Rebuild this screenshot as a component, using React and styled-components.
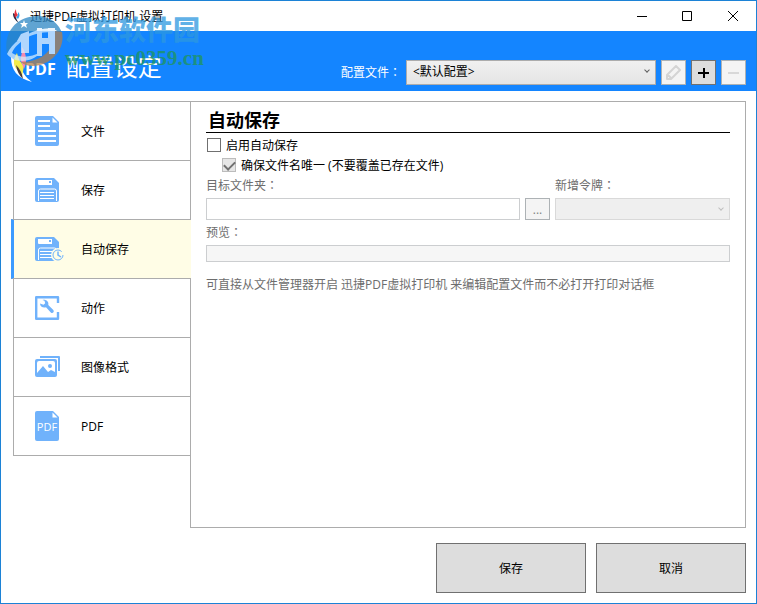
import React, { useState } from 'react'
import styled, { createGlobalStyle } from 'styled-components'

const menuItems = [
  { id: 'file', label: '文件' },
  { id: 'save', label: '保存' },
  { id: 'autosave', label: '自动保存' },
  { id: 'actions', label: '动作' },
  { id: 'image', label: '图像格式' },
  { id: 'pdf', label: 'PDF' },
]

const Sheet = () => (
  <g>
    <path d="M2 1h16l6 6v22a2 2 0 0 1-2 2H2a2 2 0 0 1-2-2V3a2 2 0 0 1 2-2z" fill="#70b2fb" />
    <path d="M17.500 2.500v5h5z" fill="#fff" />
  </g>
)

const MenuIcon = ({ id }) => {
  switch (id) {
    case 'file':
      return (
        <svg width="32" height="32" viewBox="0 0 32 32">
          <Sheet />
          <path d="M3 6h12M3 11h12M3 16h18M3 21h18M3 26h18" stroke="#fff" strokeWidth="2" />
        </svg>
      )
    case 'save':
    case 'autosave':
      return (
        <svg width="32" height="32" viewBox="0 0 32 32">
          <path d="M2 4h17l5 5v17a2 2 0 0 1-2 2H2a2 2 0 0 1-2-2V6a2 2 0 0 1 2-2z" fill="#70b2fb" />
          <path d="M3 6h14v5H4a1 1 0 0 1-1-1z" fill="#fff" />
          <path d="M14 7h2v2h-2z" fill="#70b2fb" />
          <path d="M3.500 27V17a2 2 0 0 1 2-2h14a2 2 0 0 1 2 2v10M5 18.500h14M5 21.500h14M5 24.500h14" fill="none" stroke="#fff" />
          {id === 'autosave' && (
            <g>
              <circle cx="23" cy="22" r="7" fill="#fffde6" />
              <circle cx="23" cy="22" r="5" fill="none" stroke="#70b2fb" strokeDasharray="27 4" />
              <path d="M23 18.500V22l3 2" fill="none" stroke="#70b2fb" strokeWidth="1.500" />
            </g>
          )}
        </svg>
      )
    case 'actions':
      return (
        <svg width="32" height="32" viewBox="0 0 32 32">
          <path d="M23 11V5.200H1.200v21.600H23V20" fill="none" stroke="#70b2fb" strokeWidth="2.400" strokeLinejoin="round" />
          <path d="M5 11.500l3.500 1.200 1.700-1.400-.7-2.500L7.500 8c3.500-.8 6.500 1.500 5.800 5l5 5c1.500 1.800-.8 4-2.500 2.500l-4.800-5.200C8 16.200 5 14.500 5 11.500z" fill="#70b2fb" />
        </svg>
      )
    case 'image':
      return (
        <svg width="32" height="32" viewBox="0 0 32 32">
          <path d="M5 6h19v14" fill="none" stroke="#70b2fb" strokeWidth="2" strokeLinejoin="round" />
          <rect y="8" width="22" height="18" rx="2" fill="#70b2fb" />
          <path d="M2 12a2 2 0 0 1 2-2h14a2 2 0 0 1 2 2v9l-4-2-3 2-5-6-6 7z" fill="#fff" />
          <circle cx="15" cy="15" r="2" fill="#70b2fb" />
        </svg>
      )
    default:
      return (
        <svg width="32" height="32" viewBox="0 0 32 32">
          <Sheet />
          <text x="12" y="21" textAnchor="middle" fontSize="11" fontFamily="Open Sans, sans-serif" fill="#fff">PDF</text>
        </svg>
      )
  }
}

const FlameLogo = () => (
  <svg width="22" height="36" viewBox="0 0 22 36">
    <path d="M0 10c0 13 6 21 21 25-7-5-10-10-11-17z" fill="#fff" />
    <path d="M6 6C3 11 2 15 4 20l7 9 2-10c-4-4-6-8-7-13z" fill="#f4ec4a" />
    <path d="M11 0c1 6-2 9-1 14l3 8c3-6 3-15-2-22z" fill="#f58bb0" />
    <path d="M5 18c1 6 3 10 7 14-1-6-3-10-7-14z" fill="#4a3a3a" />
  </svg>
)

const App = () => {
  const [active, setActive] = useState('autosave')
  const [enabled, setEnabled] = useState(false)

  return (
    <Window>
      <GlobalStyle />
      <TitleBar>
        <TitleIcon>
          <svg width="10" height="14" viewBox="0 0 10 14">
            <path d="M1 4c0 5 2 7 6 10-3-4-3-5-3-8z" fill="#1d2540" />
            <path d="M4 0C2 3 2 6 3 9l3-3C4 4 4 2 4 0z" fill="#e8313c" />
            <path d="M6 3c2 2 2 4 0 7L4 8c2-1 2-2 2-5z" fill="#38a0e8" />
          </svg>
        </TitleIcon>
        <TitleText>迅捷PDF虚拟打印机 设置</TitleText>
        <WindowButton aria-label="最小化">
          <svg width="11" height="11"><path d="M1 5.500h10" stroke="#000" /></svg>
        </WindowButton>
        <WindowButton aria-label="最大化">
          <svg width="11" height="11"><path d="M.5.5h9v9h-9z" fill="none" stroke="#000" /></svg>
        </WindowButton>
        <WindowButton aria-label="关闭">
          <svg width="11" height="11"><path d="M0 0l10 10M10 0L0 10" stroke="#000" /></svg>
        </WindowButton>
      </TitleBar>

      <Header>
        <Brand>
          <FlameLogo />
          <strong>PDF</strong>
          <h1>配置设定</h1>
        </Brand>
        <Profile>
          <label htmlFor="profile">配置文件：</label>
          <SelectBox>
            <Select id="profile">
              <option>&lt;默认配置&gt;</option>
            </Select>
            <Chevron />
          </SelectBox>
          <ToolButton disabled aria-label="重命名">
            <svg width="17" height="17" viewBox="0 0 17 17" fill="none" stroke="#d4d4d4" strokeWidth="2" strokeLinejoin="round">
              <path d="M2 15v-4l9-9 4 4-9 9zM3 11l3 3" />
            </svg>
          </ToolButton>
          <ToolButton aria-label="新增">
            <svg width="11" height="11"><path d="M0 6h11M6 1v10" stroke="#000" strokeWidth="2" /></svg>
          </ToolButton>
          <ToolButton disabled aria-label="删除">
            <svg width="11" height="11"><path d="M0 6h11" stroke="#d8d8d8" strokeWidth="2" /></svg>
          </ToolButton>
        </Profile>
      </Header>

      <Content>
        <Menu>
          {menuItems.map((item) => (
            <MenuButton key={item.id} $active={item.id === active} onClick={() => setActive(item.id)}>
              <MenuIcon id={item.id} />
              <span>{item.label}</span>
            </MenuButton>
          ))}
        </Menu>
        <Panel>
          <h2>自动保存</h2>
          <Check>
            <input type="checkbox" checked={enabled} onChange={() => setEnabled(!enabled)} />
            启用自动保存
          </Check>
          <Check $nested>
            <input type="checkbox" checked disabled readOnly />
            确保文件名唯一 (不要覆盖已存在文件)
          </Check>
          <FieldRow>
            <Field $grow>
              <label htmlFor="folder">目标文件夹：</label>
              <FolderRow>
                <TextBox id="folder" disabled />
                <BrowseButton disabled>...</BrowseButton>
              </FolderRow>
            </Field>
            <Field>
              <label htmlFor="token">新增令牌：</label>
              <SelectBox $disabled>
                <Select id="token" disabled />
                <Chevron $disabled />
              </SelectBox>
            </Field>
          </FieldRow>
          <Field>
            <label htmlFor="preview">预览：</label>
            <TextBox id="preview" $preview readOnly />
          </Field>
          <Hint>可直接从文件管理器开启 迅捷PDF虚拟打印机 来编辑配置文件而不必打开打印对话框</Hint>
        </Panel>
      </Content>

      <Footer>
        <FooterButton>保存</FooterButton>
        <FooterButton>取消</FooterButton>
      </Footer>

      <Watermark>
        <svg width="60" height="60" viewBox="0 0 60 60">
          <path d="M3 42C-1 20 12 5 33 4c13 0 23 8 25 18-6-5-14-7-22-4C20 21 9 30 3 42z" fill="#2b86c4" />
          <path d="M58 20c3 15-7 29-22 33-8 2-15 1-19-3 17 0 29-8 33-21 1-4 0-7-2-10 4 0 7 0 10 1z" fill="#b08050" />
          <path d="M3 42c5-11 17-20 31-24 7-2 13-1 16 3-7-2-16 0-24 3C17 29 10 35 8 41c8 5 18 5 29-1-9 11-26 12-34 2z" fill="#d5ebfb" />
          <path d="M25 19v22h-8V29h-4l4-7zM33 16h5v10h6V16h7v26h-6V32h-7v12h-5z" fill="#e4f1fd" />
          <path d="M20 8l1 3h3l-2 2 1 3-3-2-3 2 1-3-2-2h3z" fill="#fff" />
        </svg>
        <div>
          <b>河东软件园</b>
          <i>www.pc0359.cn</i>
        </div>
      </Watermark>
    </Window>
  )
}

const GlobalStyle = createGlobalStyle`
  * {
    box-sizing: border-box;
  }
  body {
    margin: 0;
    background: #fff;
  }
  body, button, input, select {
    font-family: "Open Sans", "Noto Sans CJK SC", sans-serif;
    font-size: 12px;
    color: #000;
  }
  svg {
    display: block;
    flex: none;
  }
`

const Window = styled.div`
  position: relative;
  display: flex;
  flex-direction: column;
  min-height: 100vh;
  border: 1px solid #1c82d6;
`

const TitleBar = styled.div`
  display: flex;
  align-items: center;
  height: 30px;
  padding-left: 11px;
`

const TitleIcon = styled.div`
  width: 18px;
`

const TitleText = styled.span`
  flex: 1;
`

const WindowButton = styled.button`
  display: flex;
  align-items: center;
  justify-content: center;
  width: 46px;
  height: 28px;
  padding: 0;
  border: none;
  background: none;
`

const Header = styled.header`
  display: flex;
  justify-content: space-between;
  height: 60px;
  padding: 0 10px;
  color: #fff;
  background: #1485ff;
`

const Brand = styled.div`
  display: flex;
  align-items: center;
  padding-top: 8px;
  strong {
    margin-left: -8px;
    padding-top: 8px;
    font-size: 16px;
    font-weight: 700;
  }
  h1 {
    margin: 0 0 0 10px;
    font-size: 24px;
    font-weight: 400;
  }
`

const Profile = styled.div`
  display: flex;
  align-items: flex-end;
  gap: 5px;
  padding-bottom: 6px;
  label {
    font-family: "Open Sans", "Noto Sans CJK TC", sans-serif;
    line-height: 25px;
  }
`

const SelectBox = styled.div`
  position: relative;
  width: ${({ $disabled }) => ($disabled ? '175px' : '250px')};
  height: ${({ $disabled }) => ($disabled ? '22px' : '25px')};
`

const Select = styled.select`
  appearance: none;
  width: 100%;
  height: 100%;
  padding: 0 20px 2px 6px;
  border: 1px solid #acacac;
  border-radius: 0;
  background: linear-gradient(#f0f0f0, #e5e5e5);
  &:disabled {
    border-color: #d9d9d9;
    background: #efefef;
    opacity: 1;
  }
`

const Chevron = styled.span`
  position: absolute;
  top: 8px;
  right: 7px;
  width: 4px;
  height: 4px;
  border: solid ${({ $disabled }) => ($disabled ? '#bfbfbf' : '#606060')};
  border-width: 0 1px 1px 0;
  transform: rotate(45deg);
  pointer-events: none;
`

const ToolButton = styled.button`
  display: flex;
  align-items: center;
  justify-content: center;
  width: 25px;
  height: 25px;
  padding: 0;
  border: 1px solid #707070;
  background: #ddd;
  &:disabled {
    border-color: #adb2b5;
    background: #f4f4f4;
  }
`

const Content = styled.main`
  display: flex;
  flex: 1;
  padding: 10px 10px 0 12px;
`

const Menu = styled.nav`
  width: 177px;
`

const MenuButton = styled.button`
  position: relative;
  display: flex;
  align-items: center;
  gap: 14px;
  width: ${({ $active }) => ($active ? '180px' : '177px')};
  height: 60px;
  margin: 0 0 -1px ${({ $active }) => ($active ? '-2px' : '0')};
  padding: 0 0 0 21px;
  border: 1px solid #acacac;
  border-width: 1px 0 1px 1px;
  background: ${({ $active }) => ($active ? '#fffde6' : '#fff')};
  ${({ $active }) => $active && 'border-left: 3px solid #3c9bff;'}
`

const Panel = styled.section`
  flex: 1;
  padding: 7px 15px;
  border: 1px solid #acacac;
  h2 {
    margin: 0 0 2px;
    padding-left: 2px;
    border-bottom: 1px solid #000;
    font-size: 18px;
    line-height: 23px;
  }
`

const Check = styled.label`
  display: flex;
  align-items: center;
  gap: 5px;
  height: 20px;
  padding-left: ${({ $nested }) => ($nested ? '16px' : '1px')};
  input {
    appearance: none;
    display: flex;
    align-items: center;
    justify-content: center;
    width: 14px;
    height: 14px;
    margin: 0;
    border: 1px solid #707070;
    background: #fff;
  }
  input:disabled {
    border-color: #bcbcbc;
    background: #e6e6e6;
  }
  input:checked::before {
    content: "";
    width: 5px;
    height: 9px;
    margin-bottom: 2px;
    border: solid #707070;
    border-width: 0 2px 2px 0;
    transform: rotate(45deg);
  }
`

const FieldRow = styled.div`
  display: flex;
  gap: 5px;
  margin-bottom: 2px;
`

const Field = styled.div`
  display: flex;
  flex-direction: column;
  flex: ${({ $grow }) => ($grow ? 1 : 'none')};
  /* the TC face keeps the full-width colon in the middle of its cell */
  label {
    height: 23px;
    font-family: "Open Sans", "Noto Sans CJK TC", sans-serif;
    line-height: 22px;
    color: #6d6d6d;
  }
`

const FolderRow = styled.div`
  display: flex;
  gap: 5px;
`

const TextBox = styled.input`
  flex: ${({ $preview }) => ($preview ? 'none' : 1)};
  min-width: 0;
  height: ${({ $preview }) => ($preview ? '17px' : '22px')};
  padding: 0 4px;
  border: 1px solid #ccced0;
  background: ${({ $preview }) => ($preview ? '#f6f6f6' : '#fff')};
`

const BrowseButton = styled.button`
  width: 25px;
  height: 22px;
  padding: 0;
  border: 1px solid #adb2b5;
  color: #838383;
  background: #f4f4f4;
`

const Hint = styled.p`
  margin: 13px 0;
  line-height: 20px;
  color: #6d6d6d;
`

const Footer = styled.footer`
  display: flex;
  justify-content: flex-end;
  gap: 10px;
  padding: 15px 10px 10px;
`

const FooterButton = styled.button`
  width: 150px;
  height: 50px;
  border: 1px solid #707070;
  background: #ddd;
`

const Watermark = styled.div`
  position: absolute;
  top: 11px;
  left: 3px;
  display: flex;
  gap: 1px;
  opacity: 0.75;
  pointer-events: none;
  div {
    display: flex;
    flex-direction: column;
  }
  b {
    font-size: 27px;
    font-weight: 900;
    line-height: 36px;
    color: #2d98e0;
  }
  i {
    font-family: "Liberation Serif", serif;
    font-size: 21px;
    font-style: normal;
    font-weight: 700;
    line-height: 20px;
    color: #1f9558;
  }
`

export default App
